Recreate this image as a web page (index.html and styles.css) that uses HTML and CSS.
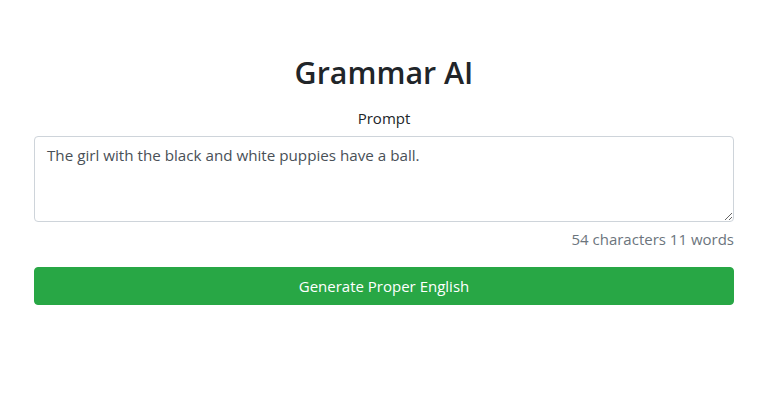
FILE: index.html
```html
<!DOCTYPE html>
<html lang="en">
<head>
<meta charset="utf-8">
<title>Grammar AI</title>
<link rel="stylesheet" href="styles.css">
</head>
<body>
<main class="container">
  <h1 class="title">Grammar AI</h1>
  <form class="form">
    <label class="label" for="prompt">Prompt</label>
    <textarea id="prompt" class="textarea" rows="3">The girl with the black and white puppies have a ball.</textarea>
    <div class="counter">54 characters 11 words</div>
    <button type="button" class="btn">Generate Proper English</button>
  </form>
</main>
</body>
</html>
```
FILE: styles.css
```css
* { box-sizing: border-box; }
html, body { margin: 0; padding: 0; background: #fff; }
body {
  font-family: "Open Sans", "Noto Sans", "Liberation Sans", sans-serif;
  font-size: 16px;
  line-height: 1.5;
  color: #212529;
}
.container {
  width: 700px;
  margin-left: 34px;
  padding-top: 55px;
}
.title {
  margin: 0 0 15px;
  font-size: 30.4px;
  height: 37px;
  font-weight: 600;
  line-height: 1.2;
  text-align: center;
  color: #212529;
}
.form { display: flex; flex-direction: column; }
.label {
  display: block;
  text-align: center;
  margin-bottom: 6px;
  font-size: 15px;
}
.textarea {
  display: block;
  width: 100%;
  height: 86px;
  padding: 6px 12px;
  font-family: inherit;
  font-size: 15.2px;
  line-height: 24px;
  color: #495057;
  border: 1px solid #ced4da;
  border-radius: 4px;
  resize: vertical;
}
.counter {
  text-align: right;
  color: #6c757d;
  font-size: 15px;
  margin-top: 6px;
}
.btn {
  margin-top: 17px;
  height: 38px;
  width: 100%;
  border: 1px solid #28a745;
  background: #28a745;
  color: #fff;
  font-family: inherit;
  font-size: 15px;
  border-radius: 4px;
}
```
